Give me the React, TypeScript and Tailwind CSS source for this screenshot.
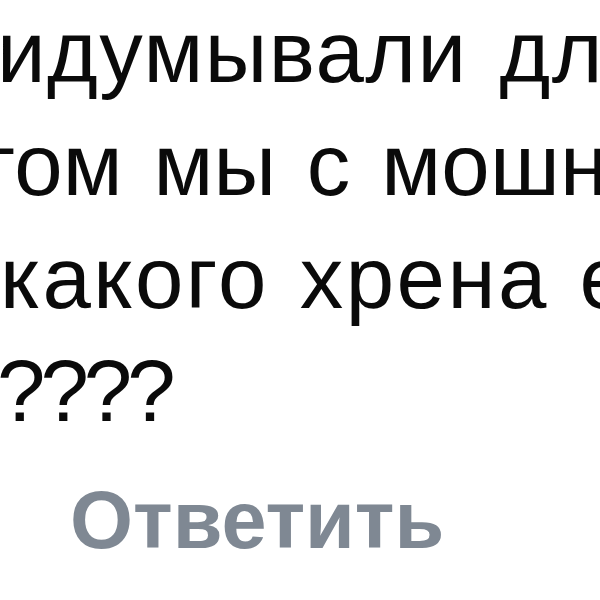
const lines = [
  { text: 'идумывали дл', style: '-ml-[3px] tracking-[1.5px] [word-spacing:6px]' },
  { text: 'том мы с мошн', style: '-ml-[25px] tracking-[0.3px] [word-spacing:6px]' },
  { text: 'какого хрена е', style: 'ml-[0px] tracking-[2.5px] [word-spacing:4px]' },
  { text: '????', style: '-ml-[3px] tracking-[-5px]' },
];

export default function App() {
  return (
    <div className="w-[600px] h-[600px] overflow-hidden bg-white font-['Liberation_Sans',Arial,sans-serif]">
      <div className="flex flex-col -mt-[5px]">
        {lines.map((line) => (
          <div
            key={line.text}
            className={`${line.style} whitespace-nowrap text-[87px] leading-[113px] text-[#0a0a0a]`}
          >
            {line.text}
          </div>
        ))}
      </div>
      <div className="mt-[33px] pl-[70px] whitespace-nowrap text-[81px] leading-none font-bold text-[#7f8893]">
        Ответить
      </div>
    </div>
  );
}
